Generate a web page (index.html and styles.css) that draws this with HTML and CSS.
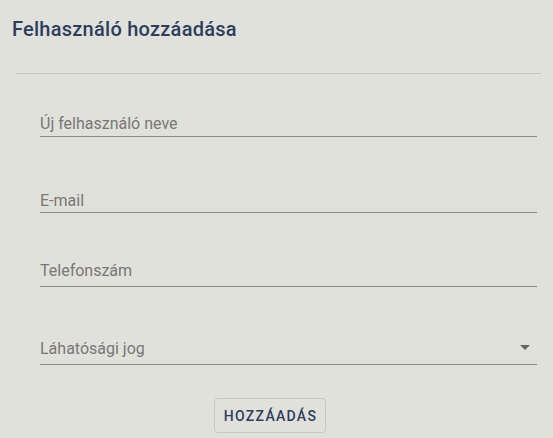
FILE: index.html
```html
<!DOCTYPE html>
<html lang="hu">
<head>
<meta charset="utf-8">
<title>Felhasználó hozzáadása</title>
<link rel="stylesheet" href="styles.css">
</head>
<body>
<div class="dialog">
  <header class="dialog-header">
    <h1 class="dialog-title">Felhasználó hozzáadása</h1>
  </header>
  <div class="divider"></div>
  <form class="form">
    <div class="field field-name"><span class="field-label">Új felhasználó neve</span></div>
    <div class="field field-email"><span class="field-label">E-mail</span></div>
    <div class="field field-phone"><span class="field-label">Telefonszám</span></div>
    <div class="field field-select">
      <span class="field-label">Láhatósági jog</span>
      <svg class="select-arrow" width="24" height="24" viewBox="0 0 24 24"><path d="M7 10l5 5 5-5z" fill="#666664"/></svg>
    </div>
    <div class="actions">
      <button type="button" class="btn">HOZZÁADÁS</button>
    </div>
  </form>
</div>
</body>
</html>
```
FILE: styles.css
```css
html, body {
  margin: 0;
  padding: 0;
  background: #e1e1dc;
  font-family: Roboto, "Liberation Sans", sans-serif;
}
.dialog {
  width: 553px;
  height: 438px;
  overflow: hidden;
}
.dialog-header {
  padding: 17px 12px 0 12px;
}
.dialog-title {
  margin: 0;
  font-size: 20px;
  line-height: 24px;
  font-weight: 500;
  letter-spacing: 0.25px;
  color: #2c3e5c;
}
.divider {
  margin: 32px 12px 0 16px;
  height: 1px;
  background: #c8c8c3;
}
.form {
  display: flex;
  flex-direction: column;
  padding: 0 16px 0 40px;
}
.field {
  position: relative;
  border-bottom: 1px solid #8a8a86;
  color: #777775;
  font-size: 16px;
  line-height: 19px;
}
.field-name { margin-top: 40px; padding-bottom: 3px; }
.field-email { margin-top: 54px; padding-bottom: 2px; }
.field-phone { margin-top: 48px; padding-bottom: 6px; }
.field-select { margin-top: 52px; padding-bottom: 6px; }
.select-arrow {
  position: absolute;
  right: 0;
  top: -4px;
}
.actions {
  display: flex;
  margin-top: 33px;
  padding-left: 174px;
}
.btn {
  font-family: Roboto, "Liberation Sans", sans-serif;
  font-size: 14px;
  font-weight: 500;
  letter-spacing: 1.3px;
  color: #2c3e5c;
  background: transparent;
  border: 1px solid #c8c8c3;
  border-radius: 4px;
  width: 112px;
  height: 35px;
  padding: 0 0 0 1px;
}
```
